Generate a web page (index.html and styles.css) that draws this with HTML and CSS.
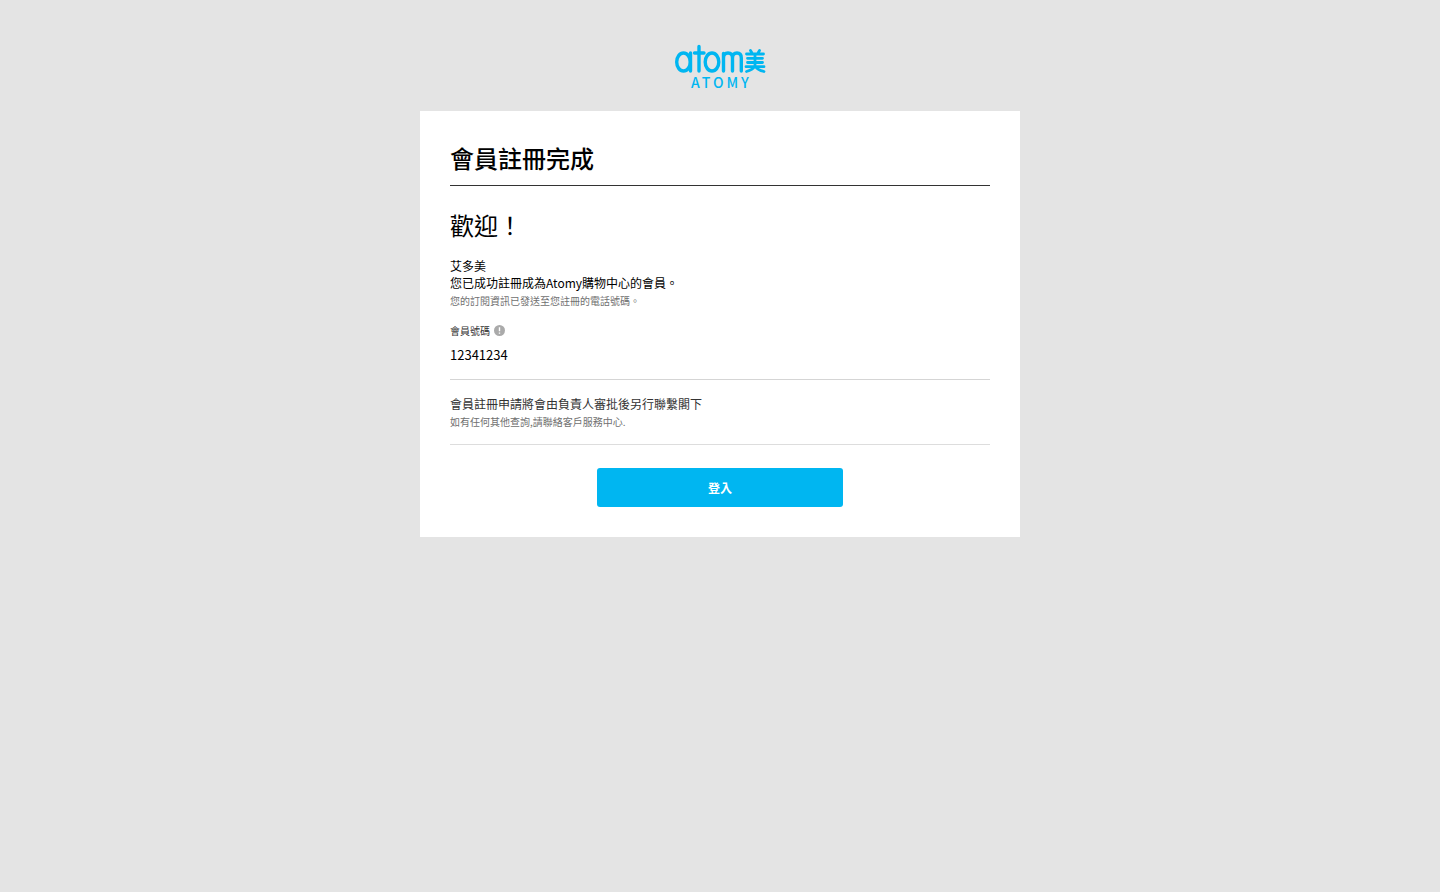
FILE: index.html
```html
<!DOCTYPE html>
<html lang="zh-Hant">
<head>
<meta charset="utf-8">
<meta name="viewport" content="width=device-width, initial-scale=1">
<title>會員註冊完成</title>
<link rel="stylesheet" href="styles.css">
</head>
<body>
<header class="site-header">
  <svg class="logo" viewBox="0 0 92 50" role="img" aria-label="Atomy">
    <g class="logo-strokes">
      <ellipse cx="9.500" cy="18" rx="6.800" ry="9"/>
      <path d="M16.500 9V27"/>
      <path d="M25 2.500V27M20.500 9H30"/>
      <ellipse cx="38" cy="18" rx="6.800" ry="9"/>
      <path d="M49.500 27V9.500M49.500 14Q49.500 9 54 9Q58.500 9 58.500 14V27M58.500 14Q58.500 9 63 9Q67.300 9 67.300 14V27"/>
    </g>
    <g class="logo-strokes logo-strokes-fine">
      <path d="M76.500 6.500L78 9M85.500 6.500L84 9M72.500 10H89.500M73.500 14.300H88.500M73.500 18.500H88.500M72 22.700H90M81 10V22M81 22Q78.500 26 72.500 27.500M81 22Q83.500 26 90 27.500"/>
    </g>
    <text class="logo-name" x="17" y="44">ATOMY</text>
  </svg>
</header>
<main class="card">
  <h1 class="card-title">會員註冊完成</h1>
  <section class="welcome">
    <h2 class="welcome-title">歡迎！</h2>
    <p class="lead">艾多美</p>
    <p class="lead">您已成功註冊成為Atomy購物中心的會員。</p>
    <p class="note">您的訂閱資訊已發送至您註冊的電話號碼。</p>
    <dl class="member">
      <dt class="member-label">會員號碼
        <svg class="info-icon" viewBox="0 0 11 11" aria-hidden="true"><circle cx="5.5" cy="5.5" r="5.5" fill="#aaa"/><path d="M5.5 2.3V6.2M5.5 7.4V8.8" stroke="#fff" stroke-width="1.4"/></svg>
      </dt>
      <dd class="member-number">12341234</dd>
    </dl>
  </section>
  <section class="review">
    <p class="review-text">會員註冊申請將會由負責人審批後另行聯繫閣下</p>
    <p class="note">如有任何其他查詢,請聯絡客戶服務中心.</p>
  </section>
  <button class="login" type="button">登入</button>
</main>
</body>
</html>
```
FILE: styles.css
```css
* { box-sizing: border-box; }

body {
  margin: 0;
  min-height: 100vh;
  background: #e4e4e4;
  color: #000;
  font-family: "Noto Sans CJK TC", sans-serif;
  font-size: 12px;
  line-height: 17px;
}

h1, h2, p, dl, dd { margin: 0; }

.site-header {
  display: flex;
  justify-content: center;
  padding: 44px 0 17px;
}

.logo { width: 92px; height: 50px; overflow: visible; }
.logo-strokes {
  fill: none;
  stroke: #00b6f1;
  stroke-width: 3.4;
  stroke-linecap: round;
  stroke-linejoin: round;
}
.logo-strokes-fine { stroke-width: 2.8; }
.logo-name {
  fill: #00b6f1;
  font-size: 14px;
  font-weight: 500;
  letter-spacing: 3px;
}

.card {
  width: 100%;
  max-width: 600px;
  margin: 0 auto;
  padding: 29px 30px 30px;
  background: #fff;
}

.card-title {
  padding-bottom: 9px;
  border-bottom: 1px solid #333;
  font-size: 24px;
  font-weight: 500;
  line-height: 36px;
}

.welcome {
  padding: 21px 0 14px;
  border-bottom: 1px solid #d5d5d5;
}
.welcome-title {
  margin-bottom: 14px;
  font-size: 24px;
  font-weight: 400;
  line-height: 36px;
}
.lead { font-weight: 400; }
.note {
  margin-top: 1px;
  color: #707070;
  font-size: 10px;
}

.member { margin-top: 13px; }
.member-label {
  display: flex;
  align-items: center;
  gap: 4px;
  color: #333;
  font-size: 10px;
}
.info-icon { width: 11px; height: 11px; }
.member-number {
  margin-top: 6px;
  font-size: 13px;
  font-weight: 400;
  line-height: 20px;
}

.review {
  padding: 15px 0 14px;
  border-bottom: 1px solid #ddd;
}
.review-text { color: #333; }

.login {
  display: block;
  width: 246px;
  height: 39px;
  margin: 23px auto 0;
  border: 0;
  border-radius: 3px;
  background: #00b6f1;
  color: #fff;
  font: 700 12px "Noto Sans CJK TC", sans-serif;
  cursor: pointer;
}
```
